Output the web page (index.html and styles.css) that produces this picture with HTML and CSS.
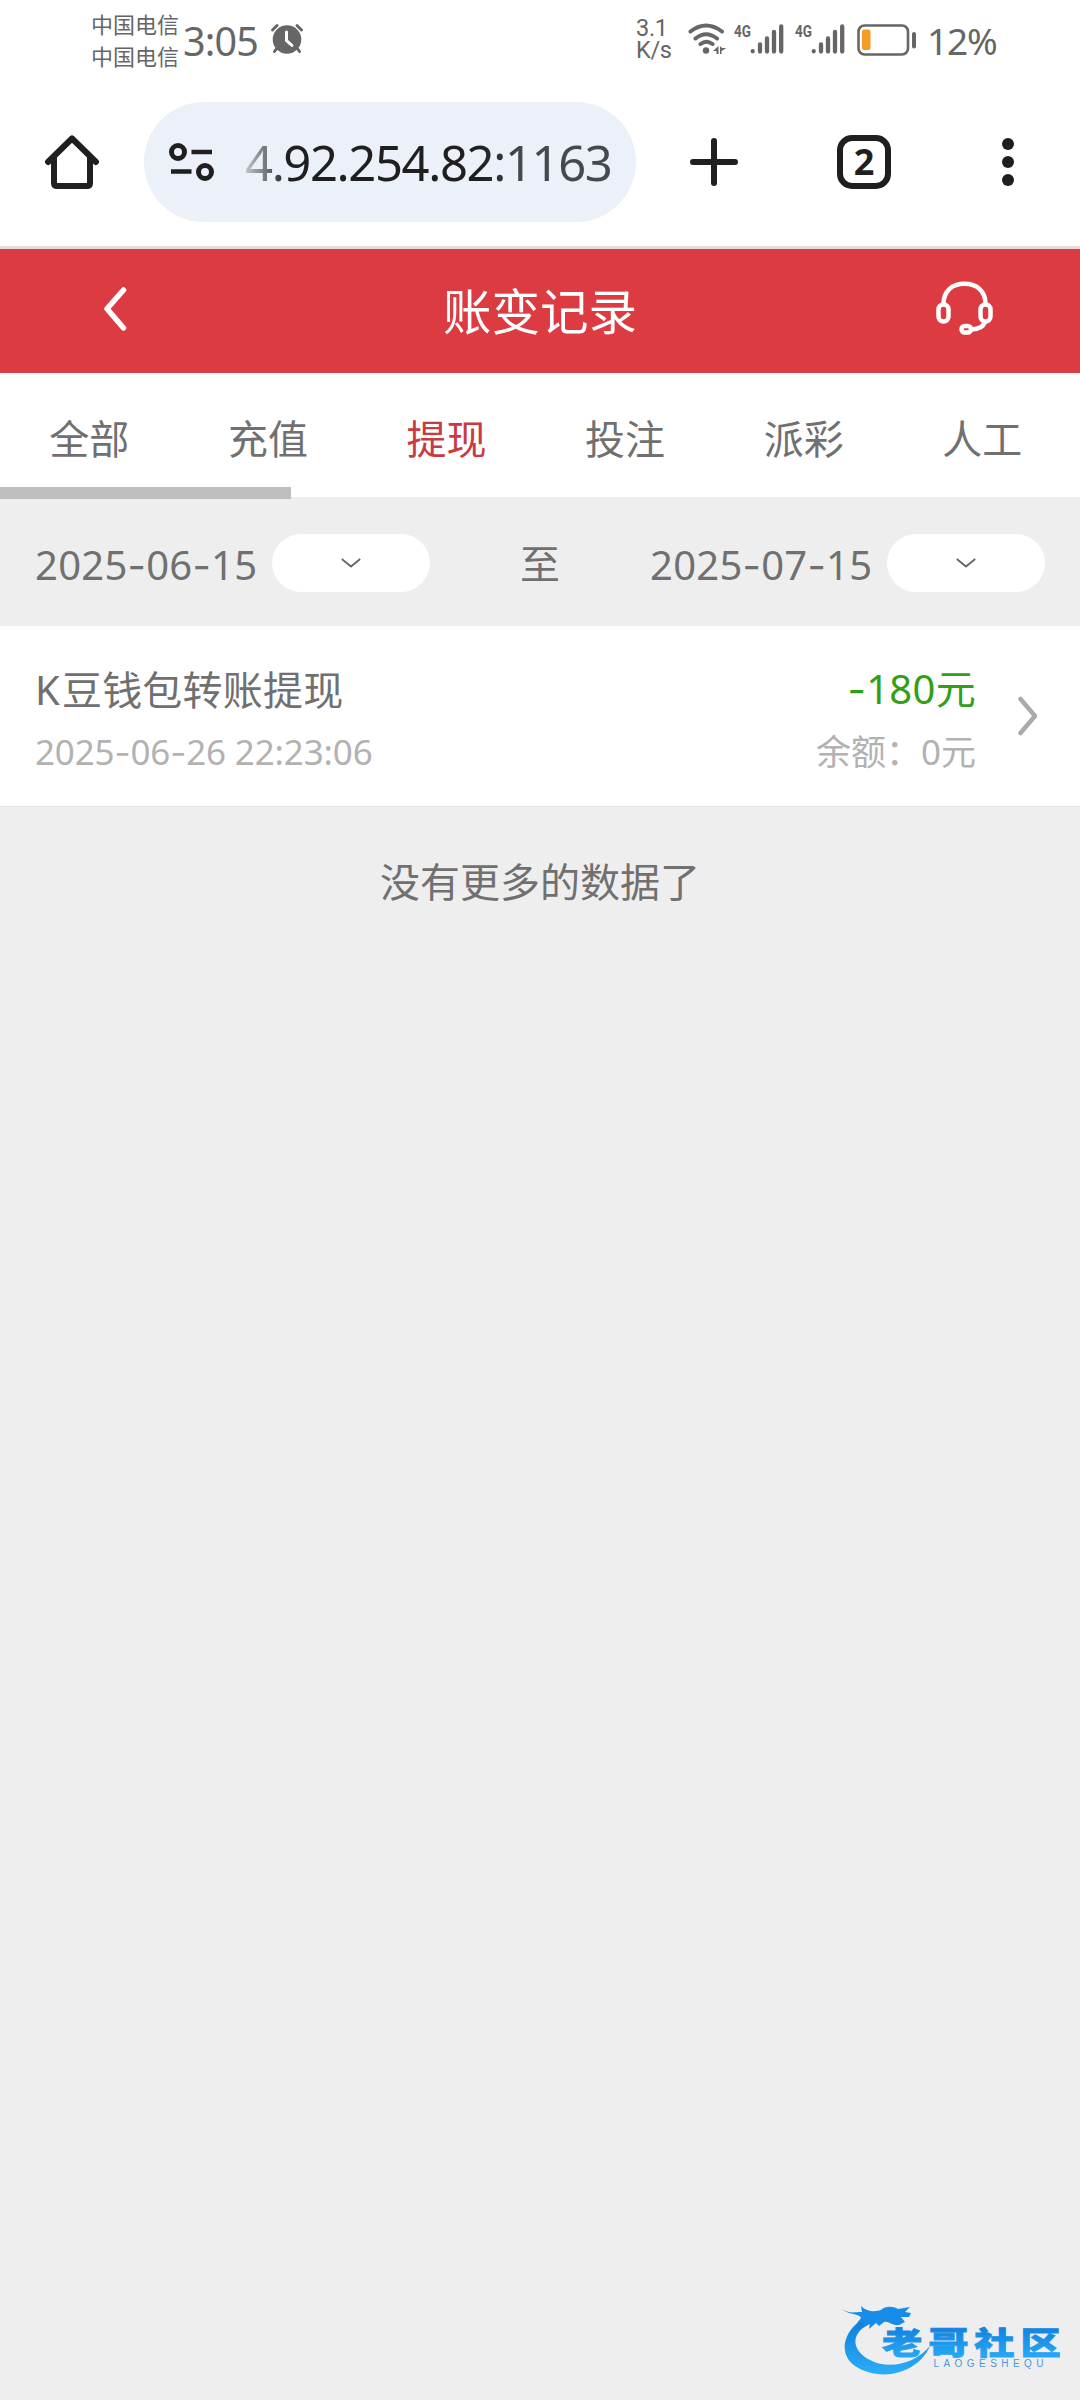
FILE: index.html
```html
<!DOCTYPE html>
<html lang="zh-CN">
<head>
<meta charset="utf-8">
<title>账变记录</title>
<link rel="stylesheet" href="styles.css">
</head>
<body>
<div class="status">
  <div class="carriers"><span>中国电信</span><span>中国电信</span></div>
  <span class="clock">3:05</span>
  <svg class="alarm" width="34" height="32" viewBox="0 0 34 32">
    <g fill="none" stroke="#666" stroke-width="3" stroke-linecap="round"><path d="M2.5 7 7 2.5M31.5 7 27 2.5M7 25 4.500 28.500M27 25l2.500 3.500"/></g>
    <circle cx="17" cy="16.500" r="14.300" fill="#666"/>
    <path d="M16.500 9v8.500l5.500 5" fill="none" stroke="#fff" stroke-width="3" stroke-linecap="round"/>
  </svg>
  <div class="speed"><span>3.1</span><span>K/s</span></div>
  <svg class="wifi" width="38" height="32" viewBox="0 0 38 32" fill="none" stroke="#666" stroke-width="4" stroke-linecap="round">
    <path d="M2.500 8.500Q18 -3.500 34 8.500M7.500 15.500q10.500-8.500 21.500 0M12.500 21q6-4.500 12 0"/>
    <circle cx="18" cy="27.500" r="3.200" fill="#666" stroke="none"/>
    <path d="M30.500 23v8h-2v-3h-3.500zM32 23v8l1.500 0v-3l5-3-4.500 0z" fill="#666" stroke="none"/>
  </svg>
  <svg class="signal" width="50" height="36" viewBox="0 -4 50 36">
    <text x="0" y="14" textLength="17" lengthAdjust="spacingAndGlyphs" class="net">4G</text>
    <path d="M18.700 28.200v.1M26 21.500v7M33 15.500v13M40 9v19.500M47.200 3.500v25" stroke="#666" stroke-width="4.300" stroke-linecap="round"/>
  </svg>
  <svg class="signal second" width="50" height="36" viewBox="0 -4 50 36">
    <text x="0" y="14" textLength="17" lengthAdjust="spacingAndGlyphs" class="net">4G</text>
    <path d="M18.700 28.200v.1M26 21.500v7M33 15.500v13M40 9v19.500M47.200 3.500v25" stroke="#666" stroke-width="4.300" stroke-linecap="round"/>
  </svg>
  <svg class="battery" width="60" height="32" viewBox="0 0 60 32">
    <rect x="1.500" y="1.500" width="49.500" height="29" rx="6" fill="none" stroke="#666" stroke-width="2.600"/>
    <rect x="5" y="5.500" width="8.500" height="20.500" rx="2" fill="#f49c26"/>
    <rect x="55" y="8" width="4" height="16.500" rx="2" fill="#666"/>
  </svg>
  <span class="percent">12%</span>
</div>

<div class="toolbar">
  <svg class="home" width="54" height="54" viewBox="0 0 54 54" fill="none" stroke="#1f1f1f" stroke-width="6" stroke-linecap="round" stroke-linejoin="round">
    <path d="M3 27 27 3.500 51 27M9 23v25q0 3 3 3h30q3 0 3-3V23"/>
  </svg>
  <div class="address">
    <svg width="46" height="40" viewBox="0 0 46 40" fill="none" stroke="#1f1f1f" stroke-width="5">
      <circle cx="9" cy="10" r="6.500"/><circle cx="36" cy="30" r="6.500"/>
      <path d="M22.500 10H43M2 29.500h20.500" stroke-width="4.500"/>
    </svg>
    <span class="url">4.92.254.82:1163</span>
  </div>
  <svg class="plus" width="48" height="48" viewBox="0 0 48 48" stroke="#1f1f1f" stroke-width="6" stroke-linecap="round"><path d="M3 24h42M24 3v42"/></svg>
  <div class="tabcount">2</div>
  <svg class="more" width="12" height="48" viewBox="0 0 12 48" fill="#1f1f1f"><circle cx="6" cy="6" r="6"/><circle cx="6" cy="24" r="6"/><circle cx="6" cy="42" r="6"/></svg>
</div>

<header class="header">
  <svg class="back" width="24" height="46" viewBox="0 0 24 46" fill="none" stroke="#fff" stroke-width="5.500" stroke-linecap="round" stroke-linejoin="round"><path d="M20.500 4 4 22.700 20.500 42"/></svg>
  <h1>账变记录</h1>
  <svg class="service" width="58" height="56" viewBox="0 0 58 56" fill="none" stroke="#fff" stroke-width="4.500">
    <path d="M7.500 23C7.500 10 16 2.800 28.500 2.800S49.500 10 49.500 23M49 41Q46 48 36 48.500"/>
    <rect x="2.500" y="23.500" width="10" height="17" rx="5"/><rect x="44.500" y="23.500" width="10" height="17" rx="5"/>
    <rect x="25.500" y="45" width="9.500" height="6.500" rx="3.200"/>
  </svg>
</header>

<nav class="tabs">
  <a>全部</a><a>充值</a><a class="active">提现</a><a>投注</a><a>派彩</a><a>人工</a>
  <i class="scrollbar"></i>
</nav>

<section class="filter">
  <div class="field">
    <span class="date">2025<b>-</b>06<b>-</b>15</span>
    <button class="picker"><svg width="20" height="10" viewBox="0 0 20 10" fill="none" stroke="#666" stroke-width="1.800"><path d="M.8 1 10 8.500 19.200 1"/></svg></button>
  </div>
  <span class="to">至</span>
  <div class="field">
    <span class="date">2025<b>-</b>07<b>-</b>15</span>
    <button class="picker"><svg width="20" height="10" viewBox="0 0 20 10" fill="none" stroke="#666" stroke-width="1.800"><path d="M.8 1 10 8.500 19.200 1"/></svg></button>
  </div>
</section>

<article class="record">
  <div class="info">
    <div class="name"><span class="initial">K</span>豆钱包转账提现</div>
    <div class="meta time">2025<b>-</b>06<b>-</b>26 22:23:06</div>
  </div>
  <div class="sum">
    <div class="amount"><b>-</b>180元</div>
    <div class="meta">余额：0元</div>
  </div>
  <svg class="go" width="22" height="42" viewBox="0 0 22 42" fill="none" stroke="#aaa" stroke-width="4.500" stroke-linecap="round" stroke-linejoin="round"><path d="M3.500 4 18 21 3.500 38"/></svg>
</article>

<p class="end">没有更多的数据了</p>

<svg class="logo" width="240" height="84" viewBox="0 0 240 84">
  <defs>
    <linearGradient id="ink" x1="0" y1="0" x2="0" y2="1"><stop offset="0" stop-color="#0b76d8"/><stop offset="1" stop-color="#2aaef8"/></linearGradient>
  </defs>
  <path d="M36 13C8 20-8 50 14 66c24 16 62 9 75-20-15 18-41 24-60 14C6 48 10 26 42 20z" fill="url(#ink)"/>
  <path d="M1 9c8 5 12 3 20 3l-1-6c6 6 14 6 20 4 4-4 12-4 17-1l12-2-5 5 6 1-2 4-8 0 4 5-6 3c-7 1-10-4-15-3l-5 4-3-3-7 6 1-6-7 4 1-5-7 1 4-5C20 14 8 15 1 9z" fill="#158bea"/>
  <text class="brand" transform="translate(41 53.500) scale(1.300 1)" fill="url(#ink)" stroke="url(#ink)">老哥社区</text>
  <text class="latin" x="92.500" y="66.500" textLength="110">LAOGESHEQU</text>
</svg>
</body>
</html>
```
FILE: styles.css
```css
* { box-sizing: border-box; }

body {
  margin: 0;
  width: 1080px;
  height: 2400px;
  position: relative;
  overflow: hidden;
  background: #eee;
  color: #707070;
  font-family: "Noto Sans", "Noto Sans CJK SC", sans-serif;
  font-size: 40px;
}

svg { display: block; flex: none; }

b {
  font-family: Inter, sans-serif;
  font-weight: 400;
}

/* phone status bar */
.status {
  display: flex;
  height: 82px;
  padding-left: 91px;
  background: #fff;
  color: #666;
}

.carriers {
  width: 92px;
  padding-top: 8px;
  display: flex;
  flex-direction: column;
  font-size: 22px;
  line-height: 32px;
}

.clock {
  width: 87px;
  font-size: 39.500px;
  line-height: 82px;
  letter-spacing: -.8px;
}

.alarm { margin-top: 23px; }

.speed {
  width: 52px;
  margin-left: 332px;
  padding-top: 17px;
  display: flex;
  flex-direction: column;
  font-family: Roboto, sans-serif;
  font-size: 23.500px;
  line-height: 22px;
  letter-spacing: -.3px;
}

.wifi { margin-top: 23px; }
.signal { margin: 19px 0 0 8px; }
.second { margin-left: 11px; }
.battery { margin: 24px 0 0 12px; }

.net {
  font: 700 17px Roboto, sans-serif;
  fill: #666;
}

.percent {
  margin-left: 10px;
  font-size: 37px;
  line-height: 81px;
  letter-spacing: -1.200px;
}

/* browser toolbar */
.toolbar {
  display: flex;
  align-items: center;
  height: 167px;
  padding: 0 0 4px 45px;
  background: #fff;
  border-bottom: 3px solid #ead9db;
}

.address {
  display: flex;
  align-items: center;
  width: 492px;
  height: 120px;
  margin-left: 45px;
  padding-left: 25px;
  border-radius: 60px;
  background: #ecf0f9;
}

.url {
  margin-left: 30px;
  font-size: 49px;
  line-height: 60px;
  letter-spacing: -1.400px;
  color: transparent;
  background: linear-gradient(90deg, #c4c8d0 0, #1f1f1f 42px, #1f1f1f 235px, #45484c 275px);
  -webkit-background-clip: text;
  background-clip: text;
}

.plus { margin-left: 54px; }

.tabcount {
  width: 54px;
  height: 54px;
  margin-left: 99px;
  border: 6px solid #1f1f1f;
  border-radius: 15px;
  color: #1f1f1f;
  font-size: 36px;
  font-weight: 700;
  line-height: 41px;
  text-align: center;
}

.more { margin-left: 111px; }

/* page header */
.header {
  display: flex;
  align-items: center;
  justify-content: space-between;
  height: 124px;
  padding: 0 86px 4px 103px;
  background: #dc3b41;
  color: #fff;
}

h1 {
  margin: 3px 0 0 17px;
  font-size: 48.500px;
  font-weight: 400;
  line-height: 60px;
}

.tabs {
  position: relative;
  display: flex;
  height: 124px;
  background: #fff;
  line-height: 132px;
  text-align: center;
}

.tabs a { width: 178.600px; }
.tabs .active { color: #c93a42; }

.scrollbar {
  position: absolute;
  left: 0;
  top: 114px;
  width: 291px;
  height: 12px;
  background: #bebebe;
}

/* date range */
.filter {
  display: flex;
  align-items: center;
  justify-content: space-between;
  height: 129px;
  padding: 3px 35px 0;
}

.field {
  display: flex;
  align-items: center;
  justify-content: space-between;
  width: 395px;
}

.date {
  padding-top: 2px;
  letter-spacing: .25px;
}

.to { margin-top: -2px; }

.picker {
  display: flex;
  align-items: center;
  justify-content: center;
  width: 158px;
  height: 58px;
  padding: 0;
  border: 0;
  border-radius: 29px;
  background: #fff;
}

/* transaction row */
.record {
  display: flex;
  align-items: center;
  height: 181px;
  padding: 0 41px 0 35px;
  background: #fff;
  border-bottom: 1px solid #e4e4e4;
}

.info,
.sum { padding-top: 7px; }

.info { flex: 1; }

.name,
.amount {
  font-size: 40px;
  line-height: 64px;
}

.initial {
  margin-right: 2px;
}

.name { letter-spacing: .2px; }

.meta {
  color: #b2b2b2;
  font-size: 35px;
  line-height: 60px;
}

.time { letter-spacing: -.15px; }

.sum { text-align: right; }
.amount { color: #329f18; letter-spacing: .3px; }
.go { margin-left: 41px; }

.end {
  margin: 0;
  line-height: 149px;
  text-align: center;
}

/* site badge over the page corner */
.logo {
  position: absolute;
  left: 841px;
  top: 2300px;
}

.brand {
  font: 900 31px "Noto Sans CJK SC", sans-serif;
  letter-spacing: 4.500px;
  stroke-width: .8px;
}

.latin {
  font: 400 10px "Liberation Sans", sans-serif;
  fill: #4a98dc;
}
```
